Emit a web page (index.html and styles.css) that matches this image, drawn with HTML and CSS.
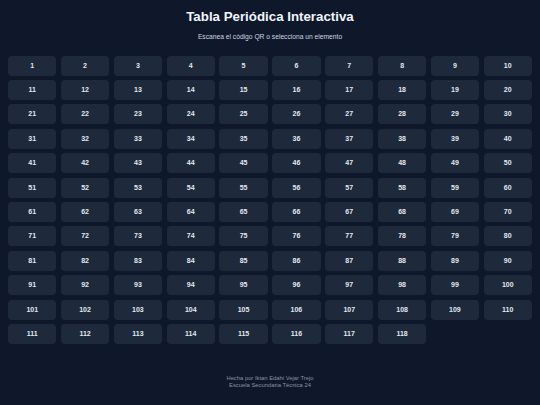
FILE: index.html
```html
<!DOCTYPE html>
<html lang="es">
<head>
<meta charset="utf-8">
<title>Tabla Periódica Interactiva</title>
<link rel="stylesheet" href="styles.css">
</head>
<body>
<header class="header">
  <h1 class="title">Tabla Periódica Interactiva</h1>
  <p class="subtitle">Escanea el código QR o selecciona un elemento</p>
</header>
<main class="grid" id="grid">
  <button class="cell">1</button><button class="cell">2</button><button class="cell">3</button><button class="cell">4</button><button class="cell">5</button><button class="cell">6</button><button class="cell">7</button><button class="cell">8</button><button class="cell">9</button><button class="cell">10</button>
  <button class="cell">11</button><button class="cell">12</button><button class="cell">13</button><button class="cell">14</button><button class="cell">15</button><button class="cell">16</button><button class="cell">17</button><button class="cell">18</button><button class="cell">19</button><button class="cell">20</button>
  <button class="cell">21</button><button class="cell">22</button><button class="cell">23</button><button class="cell">24</button><button class="cell">25</button><button class="cell">26</button><button class="cell">27</button><button class="cell">28</button><button class="cell">29</button><button class="cell">30</button>
  <button class="cell">31</button><button class="cell">32</button><button class="cell">33</button><button class="cell">34</button><button class="cell">35</button><button class="cell">36</button><button class="cell">37</button><button class="cell">38</button><button class="cell">39</button><button class="cell">40</button>
  <button class="cell">41</button><button class="cell">42</button><button class="cell">43</button><button class="cell">44</button><button class="cell">45</button><button class="cell">46</button><button class="cell">47</button><button class="cell">48</button><button class="cell">49</button><button class="cell">50</button>
  <button class="cell">51</button><button class="cell">52</button><button class="cell">53</button><button class="cell">54</button><button class="cell">55</button><button class="cell">56</button><button class="cell">57</button><button class="cell">58</button><button class="cell">59</button><button class="cell">60</button>
  <button class="cell">61</button><button class="cell">62</button><button class="cell">63</button><button class="cell">64</button><button class="cell">65</button><button class="cell">66</button><button class="cell">67</button><button class="cell">68</button><button class="cell">69</button><button class="cell">70</button>
  <button class="cell">71</button><button class="cell">72</button><button class="cell">73</button><button class="cell">74</button><button class="cell">75</button><button class="cell">76</button><button class="cell">77</button><button class="cell">78</button><button class="cell">79</button><button class="cell">80</button>
  <button class="cell">81</button><button class="cell">82</button><button class="cell">83</button><button class="cell">84</button><button class="cell">85</button><button class="cell">86</button><button class="cell">87</button><button class="cell">88</button><button class="cell">89</button><button class="cell">90</button>
  <button class="cell">91</button><button class="cell">92</button><button class="cell">93</button><button class="cell">94</button><button class="cell">95</button><button class="cell">96</button><button class="cell">97</button><button class="cell">98</button><button class="cell">99</button><button class="cell">100</button>
  <button class="cell">101</button><button class="cell">102</button><button class="cell">103</button><button class="cell">104</button><button class="cell">105</button><button class="cell">106</button><button class="cell">107</button><button class="cell">108</button><button class="cell">109</button><button class="cell">110</button>
  <button class="cell">111</button><button class="cell">112</button><button class="cell">113</button><button class="cell">114</button><button class="cell">115</button><button class="cell">116</button><button class="cell">117</button><button class="cell">118</button>
</main>
<footer class="footer">
  <p class="footer-line">Hecha por Iktan Edahi Vejar Trejo</p>
  <p class="footer-line">Escuela Secundaria Técnica 24</p>
</footer>
</body>
</html>
```
FILE: styles.css
```css
html, body {
  margin: 0;
  padding: 0;
  background: #0f172a;
}
body {
  font-family: "Liberation Sans", Arial, sans-serif;
  color: #f1f5f9;
  padding: 0 8px;
  min-height: 405px;
  box-sizing: border-box;
}
.header {
  display: flex;
  flex-direction: column;
  align-items: center;
}
.title {
  margin: 9px 0 0;
  font-size: 13.3px;
  line-height: 16px;
  font-weight: bold;
  color: #f1f5f9;
}
.subtitle {
  margin: 8px 0 0;
  font-size: 6.7px;
  line-height: 8px;
  color: #cbd5e1;
}
.grid {
  margin-top: 14.7px;
  display: grid;
  grid-template-columns: repeat(10, 1fr);
  grid-auto-rows: 20px;
  gap: 4.4px;
}
.cell {
  border: none;
  margin: 0;
  padding: 0;
  background: #1e293b;
  border-radius: 4px;
  color: #e2e8f0;
  font-family: "Liberation Sans", Arial, sans-serif;
  font-weight: bold;
  font-size: 7px;
  line-height: 20px;
  text-align: center;
}
.footer {
  margin-top: 30.8px;
  display: flex;
  flex-direction: column;
  align-items: center;
}
.footer-line {
  margin: 0;
  font-size: 5.84px;
  line-height: 7px;
  color: #8892a6;
}
```
